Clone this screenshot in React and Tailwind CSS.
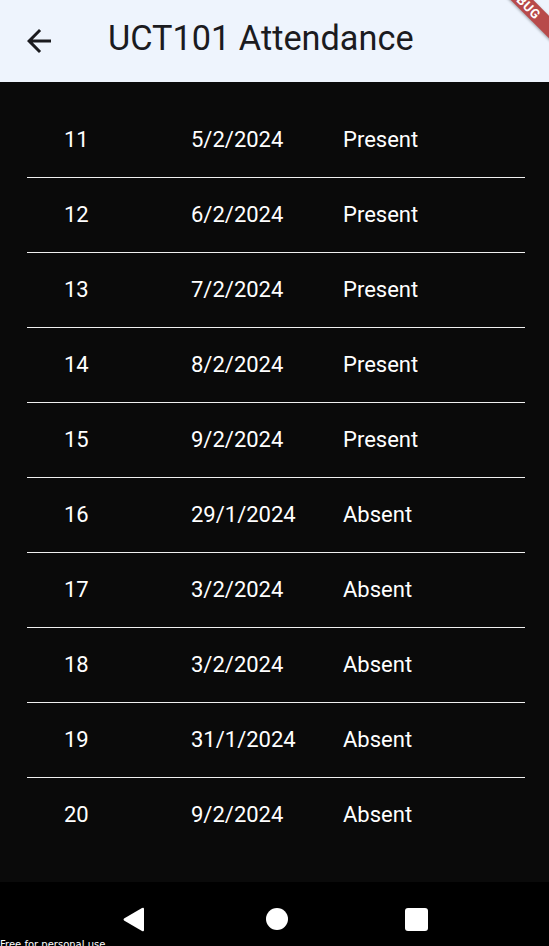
import React from "react";

const rows = [
  ["11", "5/2/2024", "Present"],
  ["12", "6/2/2024", "Present"],
  ["13", "7/2/2024", "Present"],
  ["14", "8/2/2024", "Present"],
  ["15", "9/2/2024", "Present"],
  ["16", "29/1/2024", "Absent"],
  ["17", "3/2/2024", "Absent"],
  ["18", "3/2/2024", "Absent"],
  ["19", "31/1/2024", "Absent"],
  ["20", "9/2/2024", "Absent"],
];

export default function App() {
  return (
    <div className="relative w-[549px] h-[946px] overflow-hidden flex flex-col bg-black font-['Roboto',sans-serif]">
      <header className="h-[82px] shrink-0 bg-[#eef4fd] flex items-center">
        <div className="w-[108px] pl-[21px] flex items-center">
          <svg width="36" height="36" viewBox="0 0 24 24" fill="#1b1b1f">
            <path d="M20 11H7.83l5.59-5.59L12 4l-8 8 8 8 1.41-1.41L7.83 13H20v-2z" />
          </svg>
        </div>
        <h1 className="text-[34.3px] leading-none text-[#1b1b1f] pb-[6px]">UCT101 Attendance</h1>
      </header>

      <main className="h-[800px] shrink-0 bg-[#0a0a0a] pt-[21px] pl-[27px] pr-[24px] flex flex-col">
        {rows.map((r, i) => (
          <div key={r[0]} className="flex flex-col">
            <div className="h-[73.5px] flex items-center pl-[37px] text-[22px] text-white leading-none">
              <span className="w-[127px]">{r[0]}</span>
              <span className="w-[152px]">{r[1]}</span>
              <span>{r[2]}</span>
            </div>
            {i < rows.length - 1 && <div className="h-[1.5px] bg-[#f0f0f0]" />}
          </div>
        ))}
      </main>

      <nav className="flex-1 bg-black relative">
        <svg className="absolute left-[122px] top-[25px]" width="24" height="25" viewBox="0 0 24 25">
          <path d="M22 2 L22 23 Q22 25 20 24 L2 13.5 Q1 12.5 2 11.5 L20 1 Q22 0 22 2 Z" fill="white" />
        </svg>
        <div className="absolute left-[266px] top-[26px] w-[22px] h-[22px] rounded-full bg-white" />
        <div className="absolute left-[405px] top-[26px] w-[23px] h-[23px] rounded-[3px] bg-white" />
        <span className="absolute left-0 top-[58px] text-[10px] leading-none text-white font-['DejaVu_Sans',sans-serif]">Free for personal use</span>
      </nav>

      <div className="absolute left-[468px] top-[-7px] w-[110px] h-[16px] rotate-45 bg-[#b84a4a] shadow-[0_1px_3px_rgba(0,0,0,0.35)] flex items-center justify-center">
        <span className="text-white font-bold text-[13px] leading-none tracking-[0.5px]">DEBUG</span>
      </div>
    </div>
  );
}
